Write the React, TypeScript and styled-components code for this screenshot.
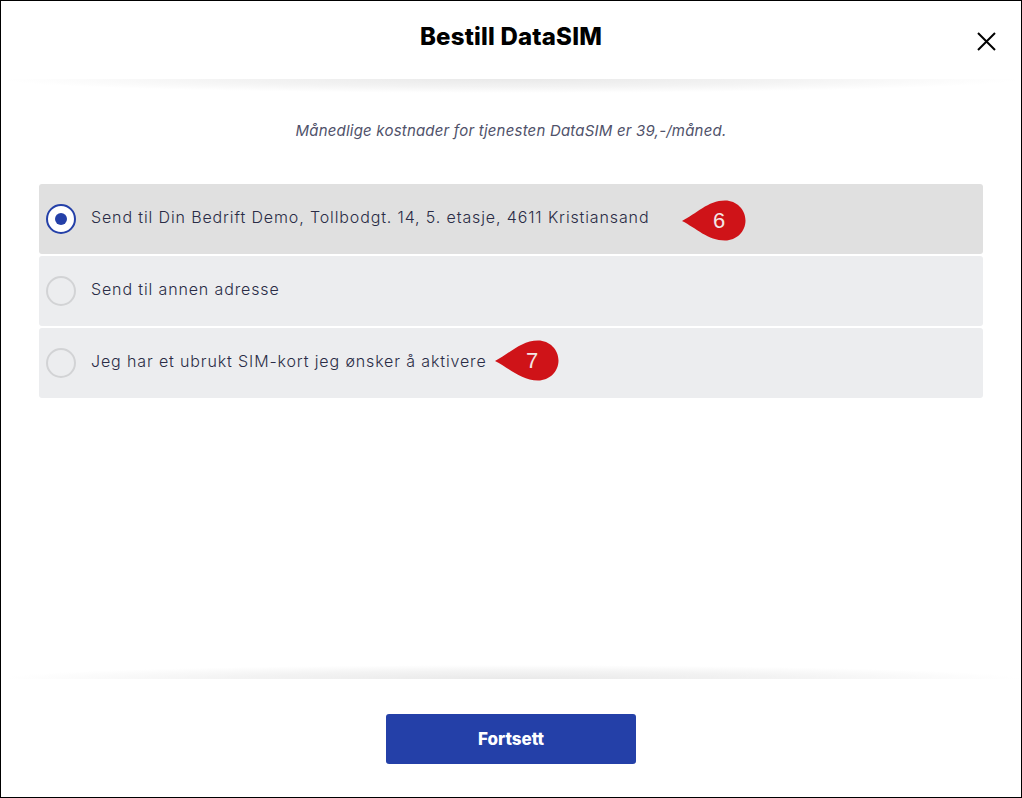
import React from "react";
import styled, { createGlobalStyle } from "styled-components";

const GlobalStyle = createGlobalStyle`
  html, body {
    margin: 0;
    padding: 0;
    background: #fff;
  }
  * {
    box-sizing: border-box;
  }
`;

const Dialog = styled.div`
  width: 1022px;
  height: 798px;
  display: flex;
  flex-direction: column;
  border: 1px solid #000;
  background: #fff;
  font-family: Inter, Lato, sans-serif;
`;

const Header = styled.header`
  position: relative;
  height: 78px;
  flex: none;
  display: flex;
  justify-content: center;
  padding-top: 21px;
`;

const Title = styled.h1`
  margin: 0;
  font-size: 24px;
  line-height: 30px;
  font-weight: 800;
  letter-spacing: 0.2px;
  color: #000;
`;

const CloseButton = styled.button`
  position: absolute;
  top: 30px;
  right: 24px;
  width: 21px;
  height: 21px;
  padding: 0;
  border: 0;
  background: none;
  display: block;
`;

const Shade = styled.div<{ $up?: boolean }>`
  height: 14px;
  flex: none;
  background: radial-gradient(
    ellipse 50% 100% at 50% ${(p) => (p.$up ? "100%" : "0%")},
    #e9e9e9 0%,
    #f3f3f3 55%,
    #ffffff 100%
  );
`;

const Body = styled.main`
  flex: 1;
  padding: 29px 38px 0;
`;

const Intro = styled.p`
  margin: 0 0 44px;
  font-size: 15px;
  line-height: 18px;
  font-style: italic;
  letter-spacing: 0.2px;
  text-align: center;
  color: #50526a;
`;

const Options = styled.div`
  display: flex;
  flex-direction: column;
  gap: 2px;
`;

const Option = styled.div<{ $selected?: boolean }>`
  position: relative;
  height: 70px;
  display: flex;
  align-items: center;
  gap: 15px;
  padding: 0 7px;
  border-radius: 3px;
  background: ${(p) => (p.$selected ? "#e0e0e0" : "#ecedef")};
`;

const Radio = styled.span<{ $selected?: boolean }>`
  width: 30px;
  height: 30px;
  flex: none;
  display: flex;
  align-items: center;
  justify-content: center;
  border-radius: 50%;
  border: 2px solid ${(p) => (p.$selected ? "#2440a8" : "#d2d3d5")};
  background: ${(p) => (p.$selected ? "#fff" : "transparent")};
`;

const Dot = styled.span`
  width: 12px;
  height: 12px;
  border-radius: 50%;
  background: #2440a8;
`;

const Label = styled.span`
  font-size: 16px;
  font-weight: 300;
  letter-spacing: 0.87px;
  color: #2a2c46;
  position: relative;
  top: -2px;
`;

const Callout = styled.div<{ $left: number; $top: number }>`
  position: absolute;
  top: ${(p) => p.$top}px;
  left: ${(p) => p.$left}px;
  width: 64px;
  height: 41px;
`;

const CalloutNumber = styled.span`
  position: absolute;
  top: 8px;
  left: 31px;
  font-family: "Liberation Sans", Arial, sans-serif;
  font-size: 22px;
  line-height: 25px;
  color: #f3e6e6;
`;

const Footer = styled.footer`
  height: 118px;
  flex: none;
  display: flex;
  justify-content: center;
  padding-top: 35px;
`;

const Continue = styled.button`
  width: 250px;
  height: 50px;
  border: 0;
  border-radius: 3px;
  background: #2440a8;
  color: #fff;
  font-family: Inter, Lato, sans-serif;
  font-size: 17px;
  font-weight: 800;
  padding-bottom: 2px;
`;

const CalloutMark = ({ n, left, top }: { n: number; left: number; top: number }) => (
  <Callout $left={left} $top={top}>
    <svg width="64" height="41" viewBox="0 0 64 41">
      <path
        d="M0 21 C14 14 26 0.5 43 0.5 C54.5 0.5 63.5 9.5 63.5 20.5 C63.5 31.5 54.5 40.5 43 40.5 C26 40.5 14 28 0 21 Z"
        fill="#cf1318"
      />
    </svg>
    <CalloutNumber>{n}</CalloutNumber>
  </Callout>
);

const options = [
  {
    text: "Send til Din Bedrift Demo, Tollbodgt. 14, 5. etasje, 4611 Kristiansand",
    selected: true,
    callout: { n: 6, left: 643, top: 16 },
  },
  { text: "Send til annen adresse", selected: false },
  {
    text: "Jeg har et ubrukt SIM-kort jeg ønsker å aktivere",
    selected: false,
    callout: { n: 7, left: 456, top: 12 },
  },
];

export default function App() {
  return (
    <>
      <GlobalStyle />
      <Dialog>
        <Header>
          <Title>Bestill DataSIM</Title>
          <CloseButton aria-label="Lukk">
            <svg width="21" height="21" viewBox="0 0 21 21">
              <path d="M2 2 L19 19 M19 2 L2 19" stroke="#000" strokeWidth="2" fill="none" />
            </svg>
          </CloseButton>
        </Header>
        <Shade />
        <Body>
          <Intro>Månedlige kostnader for tjenesten DataSIM er 39,-/måned.</Intro>
          <Options>
            {options.map((o) => (
              <Option key={o.text} $selected={o.selected}>
                <Radio $selected={o.selected}>{o.selected && <Dot />}</Radio>
                <Label>{o.text}</Label>
                {o.callout && <CalloutMark {...o.callout} />}
              </Option>
            ))}
          </Options>
        </Body>
        <Shade $up />
        <Footer>
          <Continue>Fortsett</Continue>
        </Footer>
      </Dialog>
    </>
  );
}
